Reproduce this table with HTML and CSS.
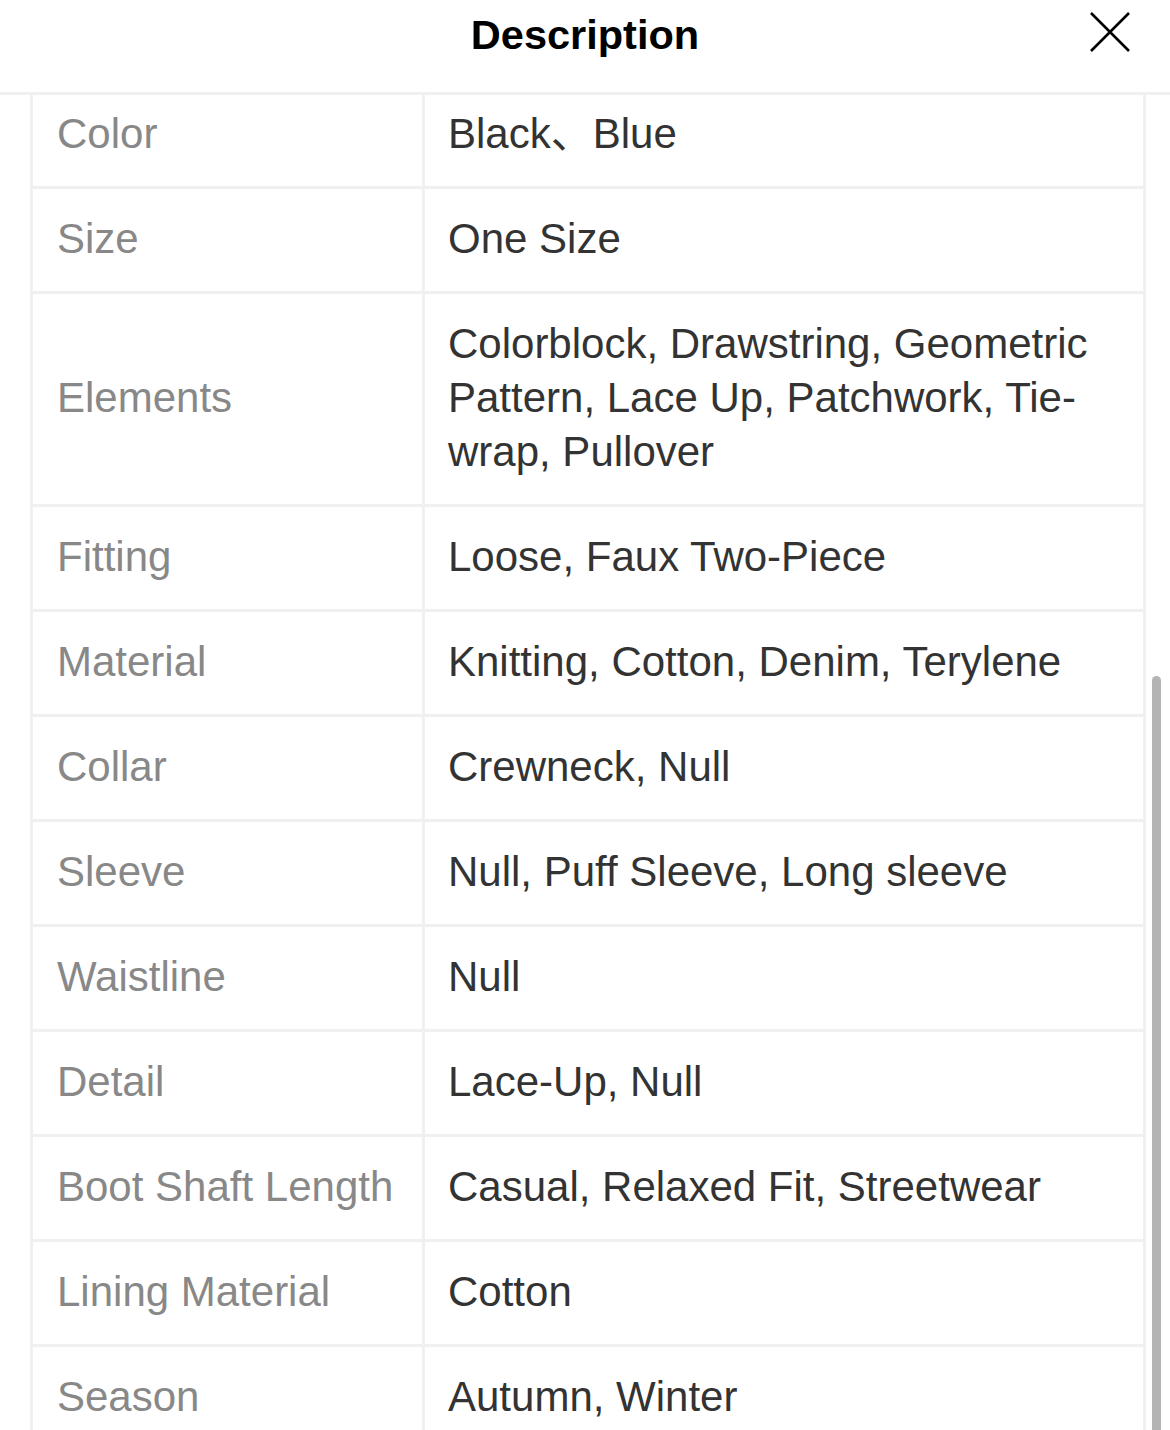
FILE: index.html
```html
<!DOCTYPE html>
<html lang="en">
<head>
<meta charset="utf-8">
<title>Description</title>
<link rel="stylesheet" href="styles.css">
</head>
<body>
<div class="sheet">
  <header class="sheet-header">
    <h1 class="sheet-title">Description</h1>
    <button class="close-btn" aria-label="Close">
      <svg viewBox="0 0 40 40" width="40" height="40"><path d="M1 1 L39 39 M39 1 L1 39" stroke="#000" stroke-width="2.6" fill="none"/></svg>
    </button>
  </header>
  <div class="sheet-body">
    <div class="attr-table">
      <div class="attr-row"><div class="attr-label">Color</div><div class="attr-value">Black、Blue</div></div>
      <div class="attr-row"><div class="attr-label">Size</div><div class="attr-value">One Size</div></div>
      <div class="attr-row"><div class="attr-label">Elements</div><div class="attr-value">Colorblock, Drawstring, Geometric Pattern, Lace Up, Patchwork, Tie-wrap, Pullover</div></div>
      <div class="attr-row"><div class="attr-label">Fitting</div><div class="attr-value">Loose, Faux Two-Piece</div></div>
      <div class="attr-row"><div class="attr-label">Material</div><div class="attr-value">Knitting, Cotton, Denim, Terylene</div></div>
      <div class="attr-row"><div class="attr-label">Collar</div><div class="attr-value">Crewneck, Null</div></div>
      <div class="attr-row"><div class="attr-label">Sleeve</div><div class="attr-value">Null, Puff Sleeve, Long sleeve</div></div>
      <div class="attr-row"><div class="attr-label">Waistline</div><div class="attr-value">Null</div></div>
      <div class="attr-row"><div class="attr-label">Detail</div><div class="attr-value">Lace-Up, Null</div></div>
      <div class="attr-row"><div class="attr-label">Boot Shaft Length</div><div class="attr-value">Casual, Relaxed Fit, Streetwear</div></div>
      <div class="attr-row"><div class="attr-label">Lining Material</div><div class="attr-value">Cotton</div></div>
      <div class="attr-row"><div class="attr-label">Season</div><div class="attr-value">Autumn, Winter</div></div>
    </div>
    <div class="scroll-thumb"></div>
  </div>
</div>
</body>
</html>
```
FILE: styles.css
```css
html, body {
  margin: 0;
  padding: 0;
  background: #fff;
}
body {
  width: 1170px;
  height: 1430px;
  overflow: hidden;
  font-family: "Liberation Sans", "Noto Sans CJK SC", Arial, sans-serif;
}
.sheet {
  display: flex;
  flex-direction: column;
  height: 1430px;
}
.sheet-header {
  position: relative;
  height: 92px;
  border-bottom: 3px solid #f0f0f0;
  display: flex;
  justify-content: center;
  flex-shrink: 0;
}
.sheet-title {
  margin: 0;
  font-size: 41.5px;
  line-height: 70px;
  font-weight: 700;
  color: #000;
}
.close-btn {
  position: absolute;
  right: 40px;
  top: 12px;
  width: 40px;
  height: 40px;
  padding: 0;
  border: 0;
  background: none;
  display: block;
}
.close-btn svg { display: block; }
.sheet-body {
  position: relative;
  flex: 1;
  overflow: hidden;
}
.attr-table {
  margin: -11px 0 0 30px;
  width: 1110px;
  border-left: 3px solid #f0f0f0;
  border-right: 3px solid #f0f0f0;
}
.attr-row {
  display: grid;
  grid-template-columns: 392px 1fr;
  border-bottom: 3px solid #f0f0f0;
}
.attr-label,
.attr-value {
  display: flex;
  align-items: center;
  padding: 23px 24px 25px;
  font-size: 42px;
  line-height: 54px;
  min-height: 54px;
}
.attr-label {
  color: #888;
  border-right: 3px solid #f0f0f0;
  padding-right: 8px;
  white-space: nowrap;
}
.attr-value {
  color: #333;
  padding-left: 23px;
  padding-right: 30px;
}
.scroll-thumb {
  position: absolute;
  left: 1152px;
  top: 581px;
  width: 9px;
  height: 800px;
  background: #b4b4b4;
  border-radius: 5px;
}
```
